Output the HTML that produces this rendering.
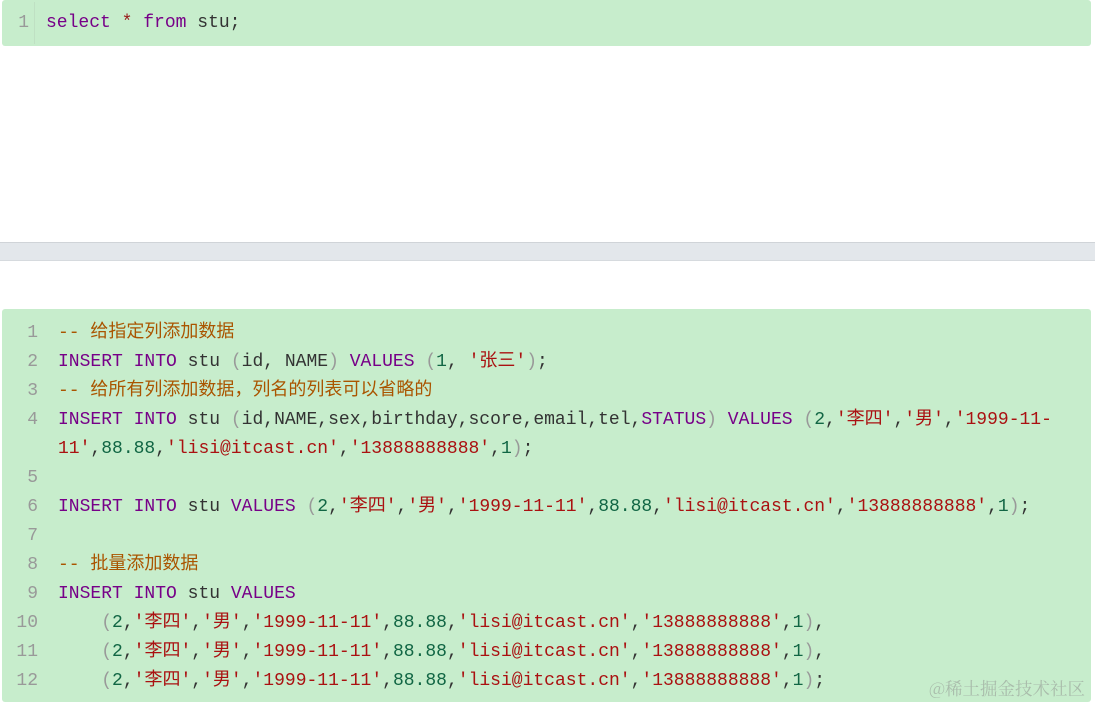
<!DOCTYPE html>
<html><head><meta charset="utf-8"><style>
body{margin:0;width:1095px;height:707px;background:#fff;position:relative;overflow:hidden;font-family:"Liberation Mono","Noto Sans CJK SC",monospace;font-size:18px}
.blk{position:absolute;left:2px;width:1089px;background:#c7edcc;border-radius:3px}
.ln{position:absolute;height:29px;line-height:29px;white-space:pre;color:#333}
.n{position:absolute;width:36px;text-align:right;color:#999;height:29px;line-height:29px}
.k{color:#770088}.s{color:#aa1111}.d{color:#116644}.c{color:#aa5500}.p{color:#999}.o{color:#981a1a}
</style></head><body>
<div class="blk" style="top:0;height:46px"></div>
<div style="position:absolute;left:34px;top:2px;width:1px;height:42px;background:#bfe0c3"></div>
<div class="n" style="left:-7px;top:9px">1</div>
<div class="ln" style="left:46px;top:9px"><span class="k">select</span> <span class="o">*</span> <span class="k">from</span> stu;</div>
<div style="position:absolute;left:0;top:242px;width:1095px;height:17px;background:#e3e7eb;border-top:1px solid #d0d4d8;border-bottom:1px solid #d6dade"></div>
<div class="blk" style="top:309px;height:393px"></div>
<div class="n" style="left:2px;top:319px">1</div>
<div class="n" style="left:2px;top:348px">2</div>
<div class="n" style="left:2px;top:377px">3</div>
<div class="n" style="left:2px;top:406px">4</div>
<div class="n" style="left:2px;top:464px">5</div>
<div class="n" style="left:2px;top:493px">6</div>
<div class="n" style="left:2px;top:522px">7</div>
<div class="n" style="left:2px;top:551px">8</div>
<div class="n" style="left:2px;top:580px">9</div>
<div class="n" style="left:2px;top:609px">10</div>
<div class="n" style="left:2px;top:638px">11</div>
<div class="n" style="left:2px;top:667px">12</div>
<div class="ln" style="left:58px;top:319px"><span class="c">-- 给指定列添加数据</span></div>
<div class="ln" style="left:58px;top:348px"><span class="k">INSERT</span> <span class="k">INTO</span> stu <span class="p">(</span>id, NAME<span class="p">)</span> <span class="k">VALUES</span> <span class="p">(</span><span class="d">1</span>, <span class="s">'张三'</span><span class="p">)</span>;</div>
<div class="ln" style="left:58px;top:377px"><span class="c">-- 给所有列添加数据，列名的列表可以省略的</span></div>
<div class="ln" style="left:58px;top:406px"><span class="k">INSERT</span> <span class="k">INTO</span> stu <span class="p">(</span>id,NAME,sex,birthday,score,email,tel,<span class="k">STATUS</span><span class="p">)</span> <span class="k">VALUES</span> <span class="p">(</span><span class="d">2</span>,<span class="s">'李四'</span>,<span class="s">'男'</span>,<span class="s">'1999-11-</span></div>
<div class="ln" style="left:58px;top:435px"><span class="s">11'</span>,<span class="d">88.88</span>,<span class="s">'lisi@itcast.cn'</span>,<span class="s">'13888888888'</span>,<span class="d">1</span><span class="p">)</span>;</div>
<div class="ln" style="left:58px;top:493px"><span class="k">INSERT</span> <span class="k">INTO</span> stu <span class="k">VALUES</span> <span class="p">(</span><span class="d">2</span>,<span class="s">'李四'</span>,<span class="s">'男'</span>,<span class="s">'1999-11-11'</span>,<span class="d">88.88</span>,<span class="s">'lisi@itcast.cn'</span>,<span class="s">'13888888888'</span>,<span class="d">1</span><span class="p">)</span>;</div>
<div class="ln" style="left:58px;top:551px"><span class="c">-- 批量添加数据</span></div>
<div class="ln" style="left:58px;top:580px"><span class="k">INSERT</span> <span class="k">INTO</span> stu <span class="k">VALUES</span></div>
<div class="ln" style="left:58px;top:609px">    <span class="p">(</span><span class="d">2</span>,<span class="s">'李四'</span>,<span class="s">'男'</span>,<span class="s">'1999-11-11'</span>,<span class="d">88.88</span>,<span class="s">'lisi@itcast.cn'</span>,<span class="s">'13888888888'</span>,<span class="d">1</span><span class="p">)</span>,</div>
<div class="ln" style="left:58px;top:638px">    <span class="p">(</span><span class="d">2</span>,<span class="s">'李四'</span>,<span class="s">'男'</span>,<span class="s">'1999-11-11'</span>,<span class="d">88.88</span>,<span class="s">'lisi@itcast.cn'</span>,<span class="s">'13888888888'</span>,<span class="d">1</span><span class="p">)</span>,</div>
<div class="ln" style="left:58px;top:667px">    <span class="p">(</span><span class="d">2</span>,<span class="s">'李四'</span>,<span class="s">'男'</span>,<span class="s">'1999-11-11'</span>,<span class="d">88.88</span>,<span class="s">'lisi@itcast.cn'</span>,<span class="s">'13888888888'</span>,<span class="d">1</span><span class="p">)</span>;</div>
<div style="position:absolute;left:929px;top:676px;font-family:'Noto Serif CJK SC','Liberation Serif',serif;font-size:17.5px;color:#a9bcab">@稀土掘金技术社区</div>
</body></html>
